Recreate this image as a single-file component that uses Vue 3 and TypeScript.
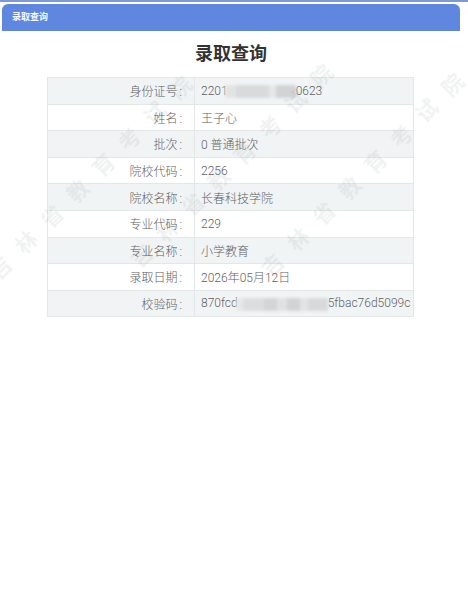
<script setup lang="ts">
type Part = { text?: string; mask?: 'id' | 'hash' }
interface Row { label: string; parts: Part[] }

const rows: Row[] = [
  { label: '身份证号', parts: [{ text: '2201' }, { mask: 'id' }, { text: '0623' }] },
  { label: '姓名', parts: [{ text: '王子心' }] },
  { label: '批次', parts: [{ text: '0 普通批次' }] },
  { label: '院校代码', parts: [{ text: '2256' }] },
  { label: '院校名称', parts: [{ text: '长春科技学院' }] },
  { label: '专业代码', parts: [{ text: '229' }] },
  { label: '专业名称', parts: [{ text: '小学教育' }] },
  { label: '录取日期', parts: [{ text: '2026年05月12日' }] },
  { label: '校验码', parts: [{ text: '870fcd' }, { mask: 'hash' }, { text: '5fbac76d5099c' }] },
]
const marks = [
  { x: -62, y: 164 },
  { x: 79, y: 152 },
  { x: 210, y: 161 },
]
const markStyle = (m: { x: number; y: number }) => ({ left: `${m.x}px`, top: `${m.y}px` })
</script>

<template>
  <div class="page">
    <div class="strip"></div>
    <header class="bar">录取查询</header>
    <h1 class="title">录取查询</h1>
    <table class="info">
      <tbody>
        <tr v-for="r in rows" :key="r.label">
          <th>{{ r.label }}<span class="colon">:</span></th>
          <td>
            <template v-for="(p, i) in r.parts" :key="i">
              <span v-if="p.text">{{ p.text }}</span>
              <span v-else class="mask" :class="p.mask"></span>
            </template>
          </td>
        </tr>
      </tbody>
    </table>
    <span v-for="(m, i) in marks" :key="i" class="mark" :style="markStyle(m)">吉林省教育考试院</span>
  </div>
</template>

<style>
html, body { margin: 0; background: #fff; }
</style>

<style scoped>
.page {
  position: relative;
  width: 468px;
  height: 608px;
  overflow: hidden;
  background: #fff;
  font-family: Roboto, "Noto Sans CJK SC", sans-serif;
}
.strip { height: 2px; background: #7f98d8; margin-bottom: 2px; }
.bar {
  height: 27px;
  line-height: 26px;
  margin: 0 8px 0 2px;
  padding-left: 10px;
  background: #5f87e0;
  border-radius: 6px 6px 0 0;
  color: #f4f7fd;
  font-size: 9px;
  font-weight: 700;
}
.title {
  margin: 0;
  height: 46px;
  line-height: 46px;
  padding-right: 6px;
  text-align: center;
  color: #333;
  font-size: 18px;
  font-weight: 700;
}
.info {
  margin-left: 47px;
  width: 367px;
  border-collapse: collapse;
  table-layout: fixed;
  color: #5f5f5f;
}
.info tr { height: 26.6px; }
.info tr:nth-child(odd) { background: #f1f4f5; }
.info th, .info td {
  border: 1px solid #e3e7e8;
  padding: 0;
  white-space: nowrap;
}
.info th {
  width: 147px;
  padding-right: 11px;
  box-sizing: border-box;
  text-align: right;
  font-size: 12px;
  font-weight: 300;
}
.colon { margin: 0 1px 0 2px; }
.info td {
  padding-left: 6px;
  font-size: 12px;
  font-weight: 300;
}
.mask {
  display: inline-block;
  height: 13px;
  vertical-align: middle;
  filter: blur(1.5px);
}
.id {
  width: 71px;
  margin-left: -3px;
  background: linear-gradient(90deg, #e2e4e4 0 15%, #d9dbdb 15% 62%, #e6e8e8 62% 72%, #d2d4d4 72% 100%);
}
.hash {
  width: 92px;
  margin-left: -2px;
  background: linear-gradient(90deg, #e6e8e8 0 8%, #dcdede 8% 30%, #d4d6d6 30% 45%, #e0e2e2 45% 55%, #d2d4d4 55% 70%, #e2e4e4 70% 78%, #d8dada 78% 100%);
}
.mark {
  position: absolute;
  padding-left: 15.4px;
  line-height: 29px;
  transform: rotate(-45deg);
  font-size: 21px;
  font-weight: 700;
  letter-spacing: 15.4px;
  white-space: nowrap;
  color: rgba(110, 120, 120, 0.1);
  filter: blur(0.4px);
  pointer-events: none;
}
</style>
